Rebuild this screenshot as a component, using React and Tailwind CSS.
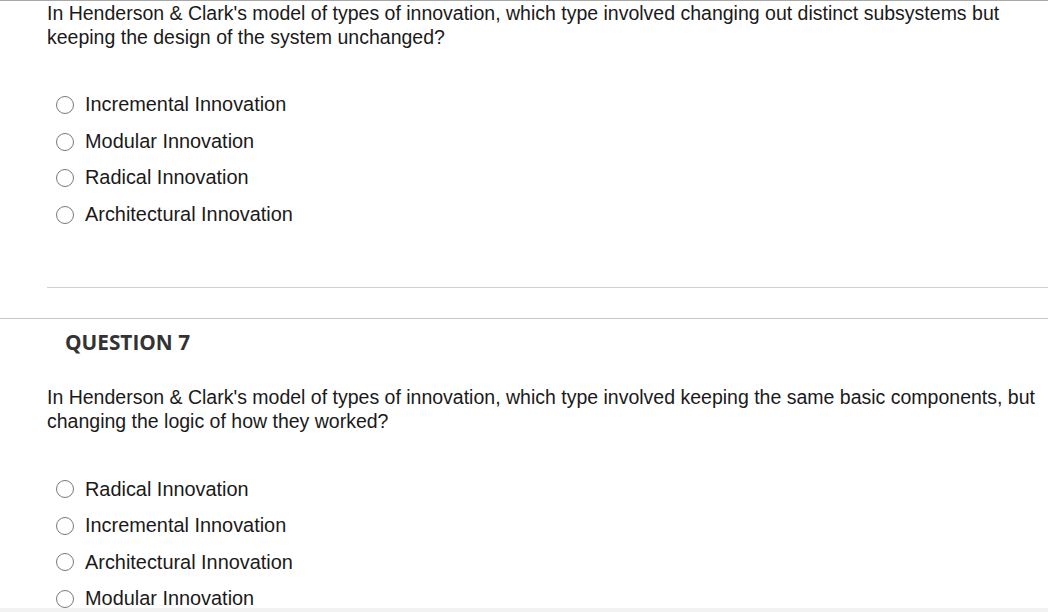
import React from 'react';

const q6Options = ['Incremental Innovation', 'Modular Innovation', 'Radical Innovation', 'Architectural Innovation'];
const q7Options = ['Radical Innovation', 'Incremental Innovation', 'Architectural Innovation', 'Modular Innovation'];

const Option = ({ label }) => (
    <label className="flex items-center h-[36.5px]">
        <span className="w-[18px] h-[18px] rounded-full border-[1.5px] border-[#7a7a7a] bg-white shrink-0" />
        <span className="ml-[11px] text-[19.9px] text-[#1a1a1a]">{label}</span>
    </label>
);

const App = () => {
    return (
        <div className="w-[1048px] h-[612px] overflow-hidden bg-white relative" style={{ fontFamily: '"Liberation Sans", Arial, sans-serif' }}>
            <div className="border-t border-[#a8a8a8]">
                {/* Question 6 tail */}
                <p className="pl-[47px] pr-[20px] text-[19.5px] leading-[24px] text-[#1a1a1a]">
                    In Henderson &amp; Clark's model of types of innovation, which type involved changing out distinct subsystems but keeping the design of the system unchanged?
                </p>
                <div className="pl-[56px] mt-[38px]">
                    {q6Options.map((o) => <Option key={o} label={o} />)}
                </div>
                <div className="ml-[47px] mt-[54px] border-b border-[#d0d0d0]" />

                {/* Question 7 */}
                <div className="mt-[30px] border-t border-[#c8c8c8]">
                    <h2 className="pl-[65px] pt-[8px] text-[20.8px] font-bold text-[#333]" style={{ fontFamily: '"Open Sans", sans-serif' }}>
                        QUESTION 7
                    </h2>
                    <p className="pl-[47px] pr-[4px] mt-[27px] text-[19.5px] leading-[24px] text-[#1a1a1a]">
                        In Henderson &amp; Clark's model of types of innovation, which type involved keeping the same basic components, but changing the logic of how they worked?
                    </p>
                    <div className="pl-[56px] mt-[38px]">
                        {q7Options.map((o) => <Option key={o} label={o} />)}
                    </div>
                </div>
            </div>
            <div className="absolute left-0 right-0 bottom-0 h-[4px] bg-[#f2f2f2]" />
        </div>
    );
};

export default App;
